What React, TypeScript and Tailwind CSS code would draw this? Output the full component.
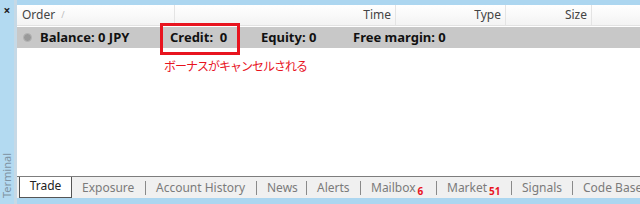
import React from "react";

const font = { fontFamily: '"Noto Sans", "Open Sans", sans-serif' };

export default function App() {
  const cols = [
    { label: "Time", w: "w-[221px]" },
    { label: "Type", w: "w-[110px]" },
    { label: "Size", w: "w-[86px]" },
  ];
  const tabs = [
    { label: "Exposure", w: "w-[73px]" },
    { label: "Account History", w: "w-[111px]" },
    { label: "News", w: "w-[50px]" },
    { label: "Alerts", w: "w-[54px]" },
    { label: "Mailbox", w: "w-[76px]", badge: "6" },
    { label: "Market", w: "w-[75px]", badge: "51" },
    { label: "Signals", w: "w-[61px]" },
    { label: "Code Base", w: "w-[80px]" },
  ];
  return (
    <div className="w-[640px] h-[204px] bg-[#acd6f0] flex overflow-hidden" style={font}>
      {/* left strip */}
      <div className="w-[18px] h-full flex flex-col justify-between items-center bg-[#b3daf1] border-r-[3px] border-[#c6d9e6]">
        <div className="mt-[4px] text-[12px] leading-[14px] font-bold text-[#222]">×</div>
        <div className="mb-[4px] h-[50px] w-[14px] flex items-center justify-center">
          <span className="block -rotate-90 text-[11px] leading-none text-[#7f93a3] whitespace-nowrap">
            Terminal
          </span>
        </div>
      </div>

      {/* main panel */}
      <div className="mt-[5px] mb-[6px] mr-[7px] flex-1 flex flex-col bg-white">
        {/* header */}
        <div className="h-[21px] flex bg-gradient-to-b from-white to-[#f3f3f3] border-b border-[#e2e2e2] text-[12px] text-[#444]">
          <div className="w-[158px] flex items-center pl-[5px] border-r border-[#e4e4e4]">
            Order <span className="ml-[6px] text-[9px] text-[#bbb]">/</span>
          </div>
          {cols.map((c) => (
            <div
              key={c.label}
              className={`${c.w} flex items-center justify-end pr-[4px] border-r border-[#e4e4e4]`}
            >
              {c.label}
            </div>
          ))}
          <div className="flex-1" />
        </div>

        {/* summary row */}
        <div className="relative mt-[1px] h-[21px] bg-[#c8c8c8] flex items-center text-[13px] font-bold text-[#111]">
          <div className="ml-[6px] w-[9px] h-[9px] rounded-full bg-[#9a9a9a] border border-[#b5b5b5]" />
          <span className="ml-[8px] w-[130px] whitespace-nowrap">Balance: 0 JPY</span>
          <span className="w-[91px] whitespace-nowrap">Credit:&nbsp; 0</span>
          <span className="w-[92px] whitespace-nowrap">Equity: 0</span>
          <span className="whitespace-nowrap">Free margin: 0</span>
          <div className="absolute left-[143px] top-[-4px] w-[80px] h-[32px] border-[3px] border-[#e8141f]" />
        </div>

        {/* body */}
        <div className="flex-1 relative">
          <div
            className="ml-[147px] mt-[10px] text-[12px] leading-[16px] tracking-[-1px] text-[#e8141f]"
            style={{ fontFamily: '"Noto Sans CJK JP", sans-serif' }}
          >
            ボーナスがキャンセルされる
          </div>
        </div>

        {/* tabs */}
        <div className="h-[22px] flex bg-[#f0f0f0] border-t border-[#7d7d7d] text-[12px] text-[#7b7b7b] overflow-hidden">
          <div className="ml-[2px] -mt-[2px] w-[53px] h-[23px] bg-white border-x border-b border-[#555] flex items-center justify-center text-[#222]">
            Trade
          </div>
          {tabs.map((t, i) => (
            <div key={t.label} className={`${t.w} shrink-0 flex items-center`}>
              {i > 0 && <div className="w-px h-[14px] bg-[#8a8a8a]" />}
              <span className="ml-[10px] whitespace-nowrap">
                {t.label}
                {t.badge && (
                  <span className="ml-[2px] text-[10px] font-bold text-[#e8141f] relative top-[3px]">
                    {t.badge}
                  </span>
                )}
              </span>
            </div>
          ))}
        </div>
      </div>
    </div>
  );
}
